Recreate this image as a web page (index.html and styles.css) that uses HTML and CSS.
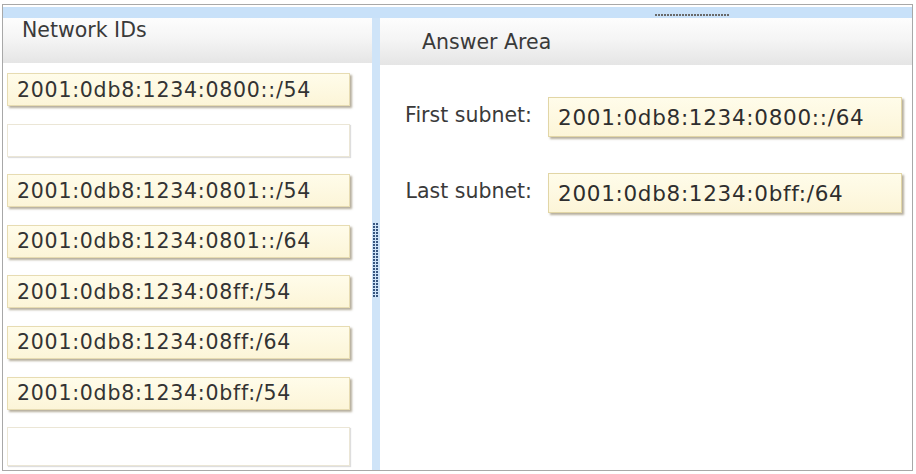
FILE: index.html
```html
<!DOCTYPE html>
<html lang="en">
<head>
    <meta charset="UTF-8">
    <meta name="viewport" content="width=device-width, initial-scale=1.0">
    <title>Answer Area</title>
    <link rel="stylesheet" href="styles.css">
</head>
<body>
    <div class="frame">
        <div class="top-bar">
            <div class="top-grip"></div>
        </div>

        <div class="panes">
            <!-- Source list -->
            <div class="pane-left">
                <div class="pane-header header-left">Network IDs</div>
                <div class="id-list">
                    <div class="tile">2001:0db8:1234:0800::/54</div>
                    <div class="tile empty"></div>
                    <div class="tile">2001:0db8:1234:0801::/54</div>
                    <div class="tile">2001:0db8:1234:0801::/64</div>
                    <div class="tile">2001:0db8:1234:08ff:/54</div>
                    <div class="tile">2001:0db8:1234:08ff:/64</div>
                    <div class="tile">2001:0db8:1234:0bff:/54</div>
                    <div class="tile empty last"></div>
                </div>
            </div>

            <div class="splitter">
                <div class="split-grip"></div>
            </div>

            <!-- Answer zone -->
            <div class="pane-right">
                <div class="pane-header header-right">Answer Area</div>
                <div class="answer-grid">
                    <div class="label">First subnet:</div>
                    <div class="tile answer">2001:0db8:1234:0800::/64</div>
                    <div class="label">Last subnet:</div>
                    <div class="tile answer">2001:0db8:1234:0bff:/64</div>
                </div>
            </div>
        </div>
    </div>
</body>
</html>
```

FILE: styles.css
```css
/* Base */
* {
    margin: 0;
    padding: 0;
    box-sizing: border-box;
}

body {
    background: #fff;
    font-family: 'DejaVu Sans', Verdana, sans-serif;
    color: #3a3a3a;
}

/* Cadre */
.frame {
    margin: 4px 0 0 2px;
    width: 911px;
    height: 467px;
    border: 1px solid #a8a8a8;
    padding-top: 2px;
    display: flex;
    flex-direction: column;
    overflow: hidden;
}

.top-bar {
    height: 11px;
    background: #c8e1f9;
    display: flex;
    align-items: flex-start;
}

.top-grip {
    margin: 7px 0 0 652px;
    width: 75px;
    height: 2px;
    background: repeating-linear-gradient(to right, #6a6a6a 0 2px, transparent 2px 3px);
}

.panes {
    flex: 1;
    display: flex;
}

/* Colonne gauche */
.pane-left {
    width: 369px;
}

.pane-header {
    background: linear-gradient(to bottom, #fdfdfd 0%, #f5f5f5 45%, #e5e5e5 100%);
    font-size: 20.5px;
}

.header-left {
    height: 45px;
    padding: 0 0 0 19px;
}

.header-right {
    height: 47px;
    padding: 12px 0 0 42px;
}

.id-list {
    padding: 10px 22px 0 4px;
    display: flex;
    flex-direction: column;
    gap: 17.6px;
}

.tile {
    height: 33px;
    padding: 0 9px;
    display: flex;
    align-items: center;
    font-size: 20.5px;
    letter-spacing: 0.75px;
    color: #333;
    background: linear-gradient(to bottom, #fffcea 0%, #fcf5d8 100%);
    border: 1px solid #e7dcb2;
    box-shadow: 2px 2px 2px rgba(110, 95, 60, 0.5);
}

.tile.empty {
    background: #fff;
    border-color: #ebe6d6;
    box-shadow: 1px 1px 1px rgba(90, 90, 90, 0.2);
}

.tile.last {
    height: 39px;
}

/* Séparateur */
.splitter {
    width: 8px;
    background: #cfe4f8;
    padding: 205px 0 0 1px;
}

.split-grip {
    width: 5px;
    height: 74px;
    background:
        linear-gradient(to right, transparent 2px, #cfe4f8 2px 3px, transparent 3px),
        repeating-linear-gradient(to bottom, #36557f 0 2px, transparent 2px 3px);
}

/* Colonne droite */
.pane-right {
    flex: 1;
}

.answer-grid {
    padding-top: 32px;
    display: grid;
    grid-template-columns: 152px 354px;
    column-gap: 16px;
    row-gap: 36px;
    align-items: center;
}

.label {
    text-align: right;
    font-size: 20.5px;
    padding-bottom: 4px;
    color: #3a3a3a;
}

.tile.answer {
    height: 40px;
    font-size: 21.5px;
    letter-spacing: 0.7px;
    color: #2e2e2e;
    border-color: #e2d6a6;
}
```
